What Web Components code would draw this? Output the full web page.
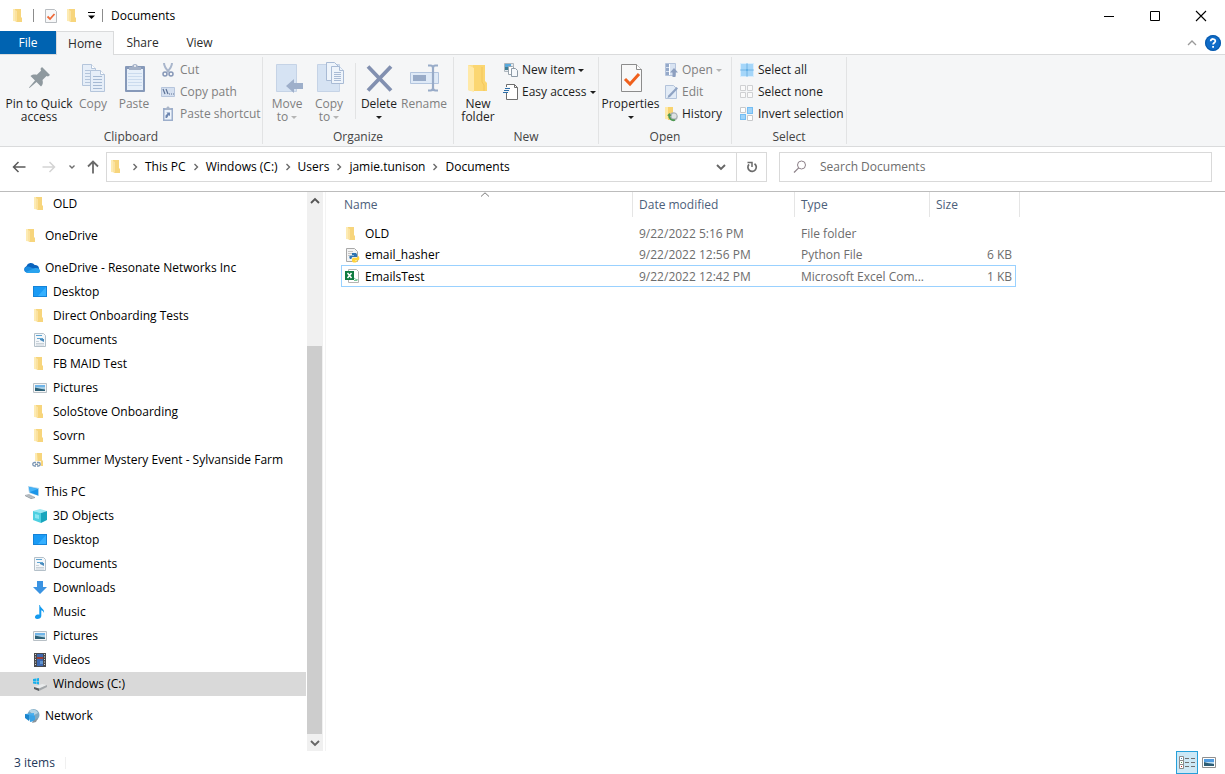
<!DOCTYPE html>
<html lang="en">
<head>
<meta charset="utf-8">
<title>Documents</title>
<style>
html, body {
  height: 100%;
}
body {
  margin: 0;
  background: #fff;
  color: #000;
  font: 12px/16px "Open Sans", "Noto Sans", sans-serif;
}
</style>
</head>
<body>
<explorer-window>
  <title-bar slot="title">Documents</title-bar>
  <ribbon-tabs slot="tabs"></ribbon-tabs>

  <ribbon-bar slot="ribbon">
    <ribbon-group label="Clipboard" style="width: 263px">
      <ribbon-button large icon="pin" style="width: 72px">Pin to Quick access</ribbon-button>
      <ribbon-button large disabled icon="copy" style="width: 36px">Copy</ribbon-button>
      <ribbon-button large disabled icon="paste" style="width: 46px">Paste</ribbon-button>
      <ribbon-stack>
        <ribbon-button disabled icon="cut">Cut</ribbon-button>
        <ribbon-button disabled icon="copy-path">Copy path</ribbon-button>
        <ribbon-button disabled icon="paste-shortcut">Paste shortcut</ribbon-button>
      </ribbon-stack>
    </ribbon-group>
    <ribbon-group label="Organize" style="width: 191px">
      <ribbon-button large disabled menu icon="move-to" style="width: 42px">Move to</ribbon-button>
      <ribbon-button large disabled menu icon="copy-to" style="width: 42px">Copy to</ribbon-button>
      <ribbon-separator></ribbon-separator>
      <ribbon-button large menu icon="delete" style="width: 42px">Delete</ribbon-button>
      <ribbon-button large disabled icon="rename" style="width: 48px">Rename</ribbon-button>
    </ribbon-group>
    <ribbon-group label="New" style="width: 145px">
      <ribbon-button large icon="new-folder" style="width: 42px">New folder</ribbon-button>
      <ribbon-stack>
        <ribbon-button menu icon="new-item">New item</ribbon-button>
        <ribbon-button menu icon="easy-access">Easy access</ribbon-button>
      </ribbon-stack>
    </ribbon-group>
    <ribbon-group label="Open" style="width: 133px">
      <ribbon-button large menu icon="properties" style="width: 57px">Properties</ribbon-button>
      <ribbon-stack>
        <ribbon-button disabled menu icon="open">Open</ribbon-button>
        <ribbon-button disabled icon="edit">Edit</ribbon-button>
        <ribbon-button icon="history">History</ribbon-button>
      </ribbon-stack>
    </ribbon-group>
    <ribbon-group label="Select" style="width: 115px">
      <ribbon-stack>
        <ribbon-button icon="select-all">Select all</ribbon-button>
        <ribbon-button icon="select-none">Select none</ribbon-button>
        <ribbon-button icon="invert">Invert selection</ribbon-button>
      </ribbon-stack>
    </ribbon-group>
  </ribbon-bar>

  <nav-bar slot="nav" path="This PC/Windows (C:)/Users/jamie.tunison/Documents"></nav-bar>

  <tree-pane slot="tree">
    <tree-item icon="folder" level="2">OLD</tree-item>
    <tree-item icon="folder" root>OneDrive</tree-item>
    <tree-item icon="onedrive" root>OneDrive - Resonate Networks Inc</tree-item>
    <tree-item icon="desktop" level="2">Desktop</tree-item>
    <tree-item icon="folder" level="2">Direct Onboarding Tests</tree-item>
    <tree-item icon="documents" level="2">Documents</tree-item>
    <tree-item icon="folder" level="2">FB MAID Test</tree-item>
    <tree-item icon="pictures" level="2">Pictures</tree-item>
    <tree-item icon="folder" level="2">SoloStove Onboarding</tree-item>
    <tree-item icon="folder" level="2">Sovrn</tree-item>
    <tree-item icon="folder-link" level="2">Summer Mystery Event - Sylvanside Farm</tree-item>
    <tree-item icon="pc" root>This PC</tree-item>
    <tree-item icon="objects" level="2">3D Objects</tree-item>
    <tree-item icon="desktop" level="2">Desktop</tree-item>
    <tree-item icon="documents" level="2">Documents</tree-item>
    <tree-item icon="downloads" level="2">Downloads</tree-item>
    <tree-item icon="music" level="2">Music</tree-item>
    <tree-item icon="pictures" level="2">Pictures</tree-item>
    <tree-item icon="videos" level="2">Videos</tree-item>
    <tree-item icon="drive" level="2" selected>Windows (C:)</tree-item>
    <tree-item icon="network" root>Network</tree-item>
  </tree-pane>

  <file-list slot="files"></file-list>
  <status-bar slot="status">3 items</status-bar>
</explorer-window>

<script>
// name: [width, height, markup]
const ICONS = {
  "folder": [16, 16, `<path d="M2 1h7v13l-7-1z" fill="#fdebb3"/><path d="M4 1h6v8l1 1v4H5z" fill="#f7d57c"/><path d="M4 2l2 1v11l-2-1z" fill="#fbe2a0"/>`],
  "folder-link": [16, 16, `<path d="M3 1h7v13H3z" fill="#fdebb3"/><path d="M5 1h5v7l1 1v5H6z" fill="#f7d57c"/><path d="M0 9h9v6H0z" fill="#fff" opacity=".8"/><g fill="none" stroke="#7d98b5" stroke-width="1.3"><path d="M4 10.500H2.500a1.700 1.700 0 0 0 0 3.500H4M5 10.500h1.500a1.700 1.700 0 0 1 0 3.500H5M3 12.300h3"/></g>`],
  "properties-small": [16, 16, `<path d="M2.500 1.500h9l2 2v11h-11z" fill="#f7f8f9" stroke="#b9bdc1"/><path d="M4.500 8.500l2.500 2.500 4.500-5" fill="none" stroke="#ee6a3a" stroke-width="1.800"/>`],
  "qat-menu": [9, 9, `<path d="M1 1.500h7" stroke="#000"/><path d="M1 4.500h7L4.500 8z"/>`],
  "minimize": [12, 12, `<path d="M1 6.500h10" stroke="#000"/>`],
  "maximize": [12, 12, `<path d="M1.500 1.500h9v9h-9z" fill="none" stroke="#000"/>`],
  "close": [12, 12, `<path d="M1 1l10 10M11 1L1 11" stroke="#000" stroke-width="1.100"/>`],
  "collapse": [10, 6, `<path d="M1 5l4-4 4 4" fill="none" stroke="#9a9a9a" stroke-width="1.300"/>`],
  "help": [16, 16, `<circle cx="8" cy="8" r="8" fill="#0f6cc9"/><circle cx="8" cy="8" r="7.300" fill="none" stroke="#0a57a5"/><path d="M5.700 6.200c0-3 4.800-2.800 4.600 0-.1 1.500-2.200 1.700-2.200 3.400" fill="none" stroke="#fff" stroke-width="1.800"/><path d="M7.200 10.900H9v1.800H7.200z" fill="#fff"/>`],

  "pin": [32, 32, `<path d="M19 5l8 8-2 1.500-1.500-.5-4 4c.8 3 .3 5-1.500 6.500l-4.500-4.500L6.500 26 6 25.500 12 18.500l-4.500-4.500c2-1.500 4-1.800 6.300-1.200l4.200-4-.5-2z" fill="#8f999f"/>`],
  "copy": [32, 32, `<g stroke="#b4c5db" fill="#e6eef8"><path d="M5.500 2.500h9l4 4v17h-13z"/><path d="M14.500 2.500v4h4" fill="#fff"/><path d="M8 8.500h8M8 11.500h8M8 14.500h8M8 17.500h8M8 20.500h8"/><path d="M13.500 8.500h10l4 4v17h-14z"/><path d="M23.500 8.500v4h4" fill="#fff"/><path d="M16 14.500h9M16 17.500h9M16 20.500h9M16 23.500h9M16 26.500h9" stroke="#a5b9d3"/></g>`],
  "paste": [32, 32, `<rect x="7" y="4" width="20" height="26" rx="1" fill="#8699b9"/><path d="M9 7h16v21H9z" fill="#e7f0fa"/><path d="M10 11.500h14M10 14.500h14M10 17.500h14M10 20.500h14M10 23.500h14" stroke="#cbdbee"/><path d="M11 8V5h3c0-4 6-4 6 0h3v3z" fill="#a3b0c6"/><circle cx="17" cy="4" r="1" fill="#f5f6f7"/>`],
  "move-to": [34, 32, `<path d="M6.500 2.500h20v27h-20z" fill="#d6e3f3" stroke="#c5d3e6"/><path d="M16 24l8-7v4h9v6h-9v4z" fill="#9eafca"/>`],
  "copy-to": [34, 32, `<path d="M5.500 2.500h22v27h-22z" fill="#d6e3f3" stroke="#c5d3e6"/><g fill="#eef4fb" stroke="#a9bbd5"><path d="M14.500.5h8l4 4v14h-12z"/><path d="M19.500 4.500h8l4 4v13h-12z"/><path d="M27.500 4.500v4h4M22 10.500h7M22 12.500h7M22 14.500h7M22 16.500h7M22 18.500h7"/></g>`],
  "delete": [32, 32, `<path d="M5 4.500l23 24M28 4.500l-23 24" stroke="#8290b0" stroke-width="3.800" fill="none"/>`],
  "rename": [32, 32, `<path d="M2.500 10.500h28v11h-28z" fill="#dfeaf7" stroke="#b3c5de"/><path d="M5 13h13v6H5z" fill="#98abc8"/><path d="M20 3.500h2.500c2 0 2.500 1 2.500 2.500v20c0 1.500-.5 2.500-2.500 2.500H20M30 3.500h-2.500c-2 0-2.500 1-2.500 2.500M30 28.500h-2.500c-2 0-2.500-1-2.500-2.500" fill="none" stroke="#98abc8" stroke-width="2.200"/>`],
  "new-folder": [32, 32, `<path d="M6 3h17v26H9l-3-1z" fill="#fbdf8c"/><path d="M11 3h12v16l2 2v8H11z" fill="#fbd671"/><path d="M6 3l6 3v24l-6-2z" fill="#ffe9a8"/><path d="M20 5v15l2 3v6" fill="none" stroke="#f3c65c"/>`],
  "properties": [32, 32, `<path d="M6.500 2.500h15l5 5v22h-20z" fill="#f8f8f8" stroke="#8c8c8c"/><path d="M21.500 2.500v5h5" fill="#fff" stroke="#8c8c8c"/><path d="M10 17l5 5 9-10" fill="none" stroke="#f0601c" stroke-width="3"/>`],

  "cut": [16, 16, `<path d="M4 1c0 3 2 6 5 9M12 1c0 3-2 6-5 9" fill="none" stroke="#a9b6cc" stroke-width="2"/><g fill="none" stroke="#8798b7" stroke-width="1.500"><circle cx="5" cy="12" r="2"/><circle cx="11" cy="12" r="2"/></g>`],
  "copy-path": [16, 16, `<path d="M1.500 3.500h13v9h-13z" fill="#d5e0f0" stroke="#b6c5dc"/><path d="M3 5l2 5M6 5l2 5M9 10h1M11 10h1M13 10h1" stroke="#5c7194" stroke-width="1.200"/>`],
  "paste-shortcut": [16, 16, `<path d="M3 2h10v13H3z" fill="#9caecb"/><path d="M4.500 4h7v9.500h-7z" fill="#eef4fb"/><path d="M5 4V2h1.500c0-2 3-2 3 0H11v2z" fill="#a9b5c9"/><path d="M5.500 12V9.500l2-2L6.300 6.500H10v3.800L8.800 9 7 12z" fill="#6d86b0"/>`],
  "new-item": [16, 16, `<path d="M2.500 1.500h9v8h-9z" fill="#e4e9ee" stroke="#aeb6bd"/><path d="M3 2h6v3H3z" fill="#58a9dc"/><path d="M3 5h3v3H3z" fill="#3d7e95"/><path d="M6.500 4.500h4l2 2v6h-6z" fill="#fff" stroke="#9aa5ae"/><path d="M9.500 6.500h4l2 2v6h-6z" fill="#f5f8fb" stroke="#8d9aa6"/>`],
  "easy-access": [16, 16, `<path d="M4.500.5h8l3 3v12h-11z" fill="#fff" stroke="#6e6e6e"/><path d="M12.500.5v3h3" fill="none" stroke="#6e6e6e"/><path d="M3 3h5v6H1z" fill="#f5f6f7"/><path d="M3 4.500h5M2 6.500h5M1 8.500h5" stroke="#2a6da8" stroke-width="1.100"/>`],
  "open": [16, 16, `<path d="M3.500 1.500h10v12h-10z" fill="#d8e3f2" stroke="#b5c4dc"/><path d="M4 2h3v3H4zM4 6h3v3H4zM4 10h3v3H4z" fill="#95a9c9"/><path d="M7.500 2v11" stroke="#fff"/><path d="M12 6l4 4.500h-2.500V15h-3v-4.500H8z" fill="#8d9fbf"/>`],
  "edit": [16, 16, `<path d="M3.500 1.500h8l3 3v10h-11z" fill="#e2ebf6" stroke="#b3c3da"/><path d="M14.500 3L16 4.500 8 13l-2.500 1 .8-2.600z" fill="#8fa3c3"/>`],
  "history": [16, 16, `<path d="M3 1h8v13l-8-1z" fill="#ffe9a6"/><path d="M6 1h5v6l1 1v6H6z" fill="#f8d36f"/><circle cx="11.500" cy="10.500" r="4.300" fill="#a9b0b3"/><circle cx="12" cy="10" r="2.500" fill="#dfe3e4"/><path d="M7 9c0 4 3 6 6 5" fill="none" stroke="#4f9a53" stroke-width="1.800"/><path d="M5 9.500L7.500 7l2 3z" fill="#4f9a53"/>`],
  "select-all": [16, 16, `<rect x="2" y="1" width="14" height="14" fill="#d9edfc"/><path d="M3 2h5v5H3zM10 2h5v5h-5zM3 9h5v5H3zM10 9h5v5h-5z" fill="#a5d6f9"/><path d="M9 1.500v13M2.500 8h13" stroke="#3d9ce0"/>`],
  "select-none": [16, 16, `<path d="M2.500 1.500h5v5h-5zM9.500 1.500h5v5h-5zM2.500 8.500h5v5h-5zM9.500 8.500h5v5h-5z" fill="#fafafa" stroke="#cfd0d2"/>`],
  "invert": [16, 16, `<path d="M2.500 1.500h5v5h-5zM9.500 9.500h5v5h-5z" fill="#fff" stroke="#c7c9cb"/><path d="M9 1h6v7H9zM2 8h6v6H2z" fill="#74bdf3"/><path d="M10 2h4v5h-4zM3 9h4v4H3z" fill="#9ed3f9"/>`],

  "back": [16, 16, `<path d="M14.500 8H2.500M7.500 3L2.500 8l5 5" fill="none" stroke="#5a5a5a" stroke-width="1.500"/>`],
  "forward": [16, 16, `<path d="M1.500 8h12M8.500 3l5 5-5 5" fill="none" stroke="#d4d4d4" stroke-width="1.500"/>`],
  "up": [16, 16, `<path d="M8 14.500v-12M3 7.500l5-5 5 5" fill="none" stroke="#6a6a6a" stroke-width="1.800"/>`],
  "recent": [8, 6, `<path d="M1.500 1.500L4 4l2.500-2.500" fill="none" stroke="#6e6e6e" stroke-width="1.400"/>`],
  "chevron-down": [10, 8, `<path d="M1 2l4 4 4-4" fill="none" stroke="#666" stroke-width="1.900"/>`],
  "chevron-up": [10, 8, `<path d="M1 6l4-4 4 4" fill="none" stroke="#555" stroke-width="1.900"/>`],
  "chevron-right": [6, 8, `<path d="M1.500 1L4.500 4l-3 3" fill="none" stroke="#6a6a6a" stroke-width="1.400"/>`],
  "refresh": [12, 12, `<path d="M8.500 2.700A4.200 4.200 0 1 1 3 3.300" fill="none" stroke="#6b6b6b" stroke-width="1.700"/><path d="M1.500 1.500H6V6" fill="none" stroke="#6b6b6b" stroke-width="1.500"/>`],
  "search": [14, 14, `<circle cx="8.500" cy="5" r="4" fill="none" stroke="#8c8088"/><path d="M5.700 7.800L1 12.500" stroke="#8c8088" stroke-width="1.200"/>`],
  "sort": [10, 5, `<path d="M1 4.500L5 .8l4 3.700" fill="none" stroke="#7a7a7a"/>`],

  "onedrive": [16, 16, `<path d="M3 12.500a3.300 3.300 0 0 1-.6-6.300 4.700 4.700 0 0 1 8.300-1.200 4 4 0 0 1 2.300 7.500z" fill="#0a63bd"/><path d="M5.500 13c-3 0-6-1-5.200-4.200C1 6.500 4.500 5.500 7 7.500l8.500 2.800c.8 1.400-.2 2.700-2.500 2.700z" fill="#1b8be0"/><path d="M2 12l9-4c3-.5 5 1 5 2.800 0 1.500-1.200 2.200-2.500 2.200h-10z" fill="#2aa3ee"/>`],
  "desktop": [16, 16, `<path d="M1 2h14v11H1z" fill="#1583d8"/><path d="M2 3h12v9H2z" fill="#1a9bf5"/><path d="M14 3v9H6z" fill="#35b0ff"/>`],
  "documents": [16, 16, `<path d="M2.500 1.500h9l2 2v11h-11z" fill="#f4f7fa" stroke="#b4c0c9"/><path d="M4 3.500h6M5 6.500h6" stroke="#5fa5d2"/><path d="M4 9.500h3M4 11.500h8M4 13h8" stroke="#c8d1d8"/><path d="M8 7h4v3l-2-1-2-1z" fill="#4a8bbd"/>`],
  "pictures": [16, 16, `<path d="M1.500 3.500h13v9h-13z" fill="#f5f5f5" stroke="#b8c0c6"/><path d="M3 5h10v3H3z" fill="#6fb4e8"/><path d="M3 7h10v4H3z" fill="#a8cfe5"/><path d="M3 7.500c3 .5 5 1.500 10 2V11H3z" fill="#2d6177"/>`],
  "pc": [16, 16, `<path d="M1 11l6 3 4-1-6-3z" fill="#b3b9be"/><path d="M1 11v1l6 3 4-1v-1l-4 1z" fill="#8f979d"/><path d="M4 2l11 2v8L5 9z" fill="#a9d3ee"/><path d="M5 3l9 2v6.500L6 8.500z" fill="#1b95e8"/><path d="M5 3l9 2-8 3z" fill="#45b3f7"/>`],
  "objects": [16, 16, `<path d="M1 3l7-2 7 2-6 2z" fill="#9be9f4"/><path d="M1 3l8 2v10l-8-3z" fill="#4dd0e1"/><path d="M9 5l6-2v9l-6 3z" fill="#18a5bd"/><path d="M3 6l4 1v4l-4-1z" fill="#8be6f2"/>`],
  "downloads": [16, 16, `<path d="M5 1h6v6h4l-7 7-7-7h4z" fill="#3a93e2"/>`],
  "music": [16, 16, `<path d="M8 1c0 3 5 4 4 8-.5-2-2-2.500-2.700-2.700V12c0 2-2 3-4 3s-3-1.500-2-3 3-1.800 4-1.200V1z" fill="#159bef"/>`],
  "videos": [16, 16, `<path d="M2 1h12v14H2z" fill="#48494d"/><path d="M5 2h6v12H5z" fill="#3c68b1"/><path d="M5 5h6v2H5z" fill="#9c3f35"/><path d="M8 9h3v3H8z" fill="#5f94cf"/><path d="M3.500 2v12M12.500 2v12" stroke="#d4d6d8" stroke-dasharray="1 1.500"/>`],
  "drive": [16, 16, `<path d="M1 3l3-.5V5H1zM4.500 2.500L7 2v3H4.500zM1 5.500h3V8L1 7.500zM4.500 5.500H7v3L4.500 8z" fill="#17b0ec"/><path d="M2 11l8-3 5 1-8 3.500z" fill="#e9ebec"/><path d="M2 11l5 1.500V15l-5-2z" fill="#565b5f"/><path d="M7 12.500L15 9v2l-8 4z" fill="#a3a7aa"/>`],
  "network": [16, 16, `<circle cx="9.500" cy="7" r="6" fill="#7fa9c2"/><path d="M5 3c3-3 8-1 9 2l-4 2z" fill="#b5d4e5"/><path d="M1 6l9-1v7L5 11z" fill="#45aef0"/><path d="M1 6l4 1v6l-4-3z" fill="#1b84cc"/><path d="M5 7l6 1v5l-5 1z" fill="#3ba3e6"/><path d="M9 13l5-3-2 4-4 1z" fill="#8a949b"/>`],

  "python": [16, 16, `<path d="M2.500 1.500h8l3 3v10h-11z" fill="#f4f4f4" stroke="#a8a8a8"/><path d="M4 4.500h5M4 6.500h4M4 8.500h2" stroke="#c4c4c4"/><path d="M8 6h3c1.200 0 2 .6 2 1.800V10H9.500c-1.500 0-2 .6-2 2H6.500C5 12 5 8.500 6.500 8.500H10V8H8z" fill="#2e74b0"/><path d="M14 9c1.800.2 1.800 4.500 0 4.500h-3v.5h2c0 2-5 2-5 0v-1.500c0-1.200.8-1.800 2-1.800h2.500c1 0 1.500-.7 1.500-1.700z" fill="#ffd43b"/>`],
  "excel": [16, 16, `<path d="M4.500 1.500h8l2 2v11h-10z" fill="#fff" stroke="#b4b4b4"/><path d="M10 10l2 1.500 2 .5M10 12.500h3" stroke="#7bc79b" fill="none"/><rect x="1" y="3" width="9" height="9" fill="#107c41"/><path d="M3.500 5l4 5M7.500 5l-4 5" stroke="#fff" stroke-width="1.500"/>`],

  "details": [16, 14, `<g fill="#fff" stroke="#8b8b8b"><path d="M.5.5h4v4h-4zM.5 4.500h4v4h-4zM.5 8.500h4v4h-4z"/></g><path d="M2 2h1v1H2z" fill="#4a90c0"/><path d="M2 6h1v1H2z" fill="#4a9050"/><path d="M2 10h1v1H2z" fill="#c03030"/><path d="M6 2.500h4M12 2.500h4M6 6.500h4M12 6.500h4M6 10.500h4M12 10.500h4" stroke="#707070"/>`],
  "thumbs": [14, 11, `<path d="M.5.5h13v10H.5z" fill="#fff" stroke="#8f8f8f"/><path d="M2 2h10v4H2z" fill="#4f9be0"/><path d="M2 5h10v2H2z" fill="#bfe0f5"/><path d="M2 5c4 1 6 1.500 10 2v2H2z" fill="#2e5d74"/>`],
};

function icon(name) {
  const [w, h, body] = ICONS[name];
  return `<svg width="${w}" height="${h}" viewBox="0 0 ${w} ${h}" aria-hidden="true">${body}</svg>`;
}

const RESET = `
  :host, * { box-sizing: border-box; }
  svg { display: block; flex: none; }
  button {
    appearance: none; background: none; border: 0; margin: 0; padding: 0;
    color: inherit; font: inherit;
  }
`;

class BaseElement extends HTMLElement {
  constructor() {
    super();
    this.attachShadow({mode: "open"});
  }
  connectedCallback() {
    this.shadowRoot.innerHTML = `<style>${RESET}</style>` + this.render();
  }
}

customElements.define("explorer-window", class extends BaseElement {
  render() {
    return `
<style>
:host { display: flex; flex-direction: column; height: 100vh; overflow: hidden; }
main { flex: 1; min-height: 0; display: flex; border-top: 1px solid #bcbcbc; }
slot[name="files"]::slotted(*) { flex: 1; min-width: 0; }
</style>
<slot name="title"></slot>
<slot name="tabs"></slot>
<slot name="ribbon"></slot>
<slot name="nav"></slot>
<main><slot name="tree"></slot><slot name="files"></slot></main>
<slot name="status"></slot>`;
  }
});

customElements.define("title-bar", class extends BaseElement {
  render() {
    return `
<style>
:host { display: flex; align-items: center; height: 31px; flex: none; }
.quick { display: flex; align-items: center; padding-left: 11px; }
.quick button { margin-right: 6px; }
.bar { width: 1px; height: 13px; background: #8c8c8c; }
.bar:first-of-type { margin-right: 9px; }
h1 { flex: 1; font: inherit; margin: 0 0 0 8px; }
.controls { display: flex; padding-right: 1px; }
.controls button { width: 46px; height: 30px; display: grid; place-items: center; }
</style>
<div class="quick">
  <button aria-label="Window menu">${icon("folder")}</button>
  <span class="bar"></span>
  <button aria-label="Properties">${icon("properties-small")}</button>
  <button aria-label="New folder">${icon("folder")}</button>
  <button aria-label="Customize toolbar">${icon("qat-menu")}</button>
  <span class="bar"></span>
</div>
<h1><slot></slot></h1>
<div class="controls">
  <button aria-label="Minimize">${icon("minimize")}</button>
  <button aria-label="Maximize">${icon("maximize")}</button>
  <button aria-label="Close">${icon("close")}</button>
</div>`;
  }
});

customElements.define("ribbon-tabs", class extends BaseElement {
  render() {
    return `
<style>
:host { display: flex; height: 24px; flex: none; border-bottom: 1px solid #dadbdc; color: #2b2b2b; }
button { min-width: 56px; height: 23px; }
.file { background: #0063b1; color: #fff; }
.active {
  min-width: 58px; height: 24px; background: #f5f6f7;
  border: 1px solid #dadbdc; border-bottom: 0;
}
.tab { min-width: 57px; }
.tools { display: flex; align-items: center; gap: 8px; margin-left: auto; padding-right: 4px; }
.tools button { min-width: 0; display: grid; place-items: center; }
</style>
<button class="file">File</button>
<button class="active">Home</button>
<button class="tab">Share</button>
<button class="tab">View</button>
<div class="tools">
  <button aria-label="Minimize the ribbon">${icon("collapse")}</button>
  <button aria-label="Help">${icon("help")}</button>
</div>`;
  }
});

customElements.define("ribbon-bar", class extends BaseElement {
  render() {
    return `
<style>
:host { display: flex; height: 92px; flex: none; padding: 2px 0; background: #f5f6f7; border-bottom: 1px solid #dadbdc; }
</style>
<slot></slot>`;
  }
});

customElements.define("ribbon-group", class extends BaseElement {
  render() {
    return `
<style>
:host { display: flex; flex-direction: column; flex: none; padding: 2px 0 0 3px; border-right: 1px solid #e2e3e4; }
.items { display: flex; flex: 1; }
.label { text-align: center; line-height: 14px; color: #444; margin-left: -3px; }
</style>
<div class="items"><slot></slot></div>
<div class="label">${this.getAttribute("label")}</div>`;
  }
});

customElements.define("ribbon-stack", class extends BaseElement {
  render() {
    return `<style>:host { display: flex; flex-direction: column; padding-left: 3px; }</style><slot></slot>`;
  }
});

customElements.define("ribbon-separator", class extends BaseElement {
  render() {
    return `<style>:host { width: 1px; height: 56px; margin: 4px 2px 0 5px; background: #e2e3e4; }</style>`;
  }
});

customElements.define("ribbon-button", class extends BaseElement {
  render() {
    const large = this.hasAttribute("large");
    const disabled = this.hasAttribute("disabled") ? "disabled" : "";
    const arrow = this.hasAttribute("menu") ? `<i class="arrow"></i>` : "";
    return `
<style>
:host { display: block; flex: none; color: #1e1e1e; }
:host([disabled]) { color: #7f7f7f; }
button { display: flex; align-items: center; gap: 4px; height: 22px; white-space: nowrap; }
.arrow {
  display: inline-block; vertical-align: middle;
  border: 3px solid transparent; border-top-color: currentColor; border-bottom: 0;
}
:host([disabled]) .arrow { border-top-color: #b5b5b5; }
button.large {
  flex-direction: column; width: 100%; height: auto; padding-top: 3px; gap: 3px;
  line-height: 13px; white-space: normal; text-align: center;
}
</style>
<button class="${large ? "large" : ""}" ${disabled}>
  ${icon(this.getAttribute("icon"))}
  <span><slot></slot> ${arrow}</span>
</button>`;
  }
});

customElements.define("nav-bar", class extends BaseElement {
  render() {
    const crumbs = this.getAttribute("path").split("/")
      .map(name => `<li>${icon("chevron-right")}<button>${name}</button></li>`).join("");
    return `
<style>
:host { display: flex; flex: none; height: 44px; padding: 5px 13px 9px 11px; }
.history { display: flex; align-items: center; }
.history button { margin-right: 14px; }
.history button:nth-child(2) { margin-right: 11px; }
.history button:nth-child(3) { margin-right: 9px; }
.history button:nth-child(4) { margin-right: 5px; }
.address { flex: 657 1 0; min-width: 0; display: flex; align-items: center; border: 1px solid #d9d9d9; padding-left: 2px; }
ol { display: flex; flex: 1; list-style: none; margin: 0 0 0 7px; padding: 0; }
li { display: flex; align-items: center; }
li button { margin: 0 7px; white-space: nowrap; }
.drop, .refresh { width: 30px; height: 28px; display: grid; place-items: center; }
.refresh { border-left: 1px solid #d9d9d9; }
.search { flex: 405 1 0; min-width: 0; display: flex; align-items: center; gap: 13px; margin-left: 12px; padding: 0 13px; border: 1px solid #d9d9d9; }
input { flex: 1; min-width: 0; border: 0; outline: 0; padding: 0; font: inherit; background: none; }
input::placeholder { color: #6d6d6d; opacity: 1; }
</style>
<div class="history">
  <button aria-label="Back">${icon("back")}</button>
  <button aria-label="Forward" disabled>${icon("forward")}</button>
  <button aria-label="Recent locations">${icon("recent")}</button>
  <button aria-label="Up">${icon("up")}</button>
</div>
<div class="address">
  ${icon("folder")}
  <ol>${crumbs}</ol>
  <button class="drop" aria-label="Previous locations">${icon("chevron-down")}</button>
  <button class="refresh" aria-label="Refresh">${icon("refresh")}</button>
</div>
<label class="search">
  ${icon("search")}
  <input type="text" placeholder="Search Documents" aria-label="Search Documents">
</label>`;
  }
});

customElements.define("tree-pane", class extends BaseElement {
  render() {
    return `
<style>
:host { display: flex; width: 326px; flex: none; border-right: 1px solid #f3f3f3; }
nav { flex: 1; min-width: 0; overflow: hidden; }
.scroll { display: flex; flex-direction: column; width: 16px; margin: 0 2px 0 1px; background: #f0f0f0; }
.scroll button { height: 17px; flex: none; display: grid; place-items: center; }
.before { flex: 137; }
.thumb { flex: 387; margin-right: 1px; background: #cdcdcd; }
</style>
<nav><slot></slot></nav>
<div class="scroll">
  <button aria-label="Scroll up">${icon("chevron-up")}</button>
  <div class="before"></div>
  <div class="thumb"></div>
  <button aria-label="Scroll down">${icon("chevron-down")}</button>
</div>`;
  }
});

customElements.define("tree-item", class extends BaseElement {
  render() {
    return `
<style>
:host { display: block; }
:host([root]) { margin-top: 8px; }
a {
  display: flex; align-items: center; gap: 5px; height: 24px; padding-left: 24px;
  color: inherit; text-decoration: none; white-space: nowrap;
}
:host([level="2"]) a { padding-left: 32px; }
:host([selected]) a { background: #d9d9d9; }
</style>
<a href="#">${icon(this.getAttribute("icon"))}<span><slot></slot></span></a>`;
  }
});

const FILES = [
  {icon: "folder", name: "OLD", date: "9/22/2022 5:16 PM", type: "File folder", size: ""},
  {icon: "python", name: "email_hasher", date: "9/22/2022 12:56 PM", type: "Python File", size: "6 KB"},
  {icon: "excel", name: "EmailsTest", date: "9/22/2022 12:42 PM", type: "Microsoft Excel Com...", size: "1 KB", focused: true},
];

customElements.define("file-list", class extends BaseElement {
  render() {
    const rows = FILES.map(f => `
<tr class="${f.focused ? "focused" : ""}">
  <td><span class="name">${icon(f.icon)}${f.name}</span></td>
  <td>${f.date}</td>
  <td>${f.type}</td>
  <td>${f.size}</td>
  <td></td>
</tr>`).join("");
    return `
<style>
:host { display: block; padding-left: 15px; }
table { border-spacing: 0; table-layout: fixed; width: 679px; }
th { position: relative; padding: 0 0 6px; font-weight: normal; text-align: left; color: #4c607a; }
th button { display: block; width: 100%; height: 25px; padding-left: 6px; text-align: left; border-right: 1px solid #e5e5e5; }
th:first-child button { padding-left: 3px; }
th svg { position: absolute; top: 0; left: 50%; margin-left: -7px; }
td { height: 21px; padding: 0 0 0 6px; color: #6d6d6d; white-space: nowrap; line-height: 19px; border: solid transparent; border-width: 1px 0; }
td:first-child { padding-left: 2px; border-left-width: 1px; color: #000; }
td:nth-child(4) { padding-right: 3px; border-right-width: 1px; text-align: right; }
td:last-child { padding: 0; }
.focused td { height: 22px; }
.focused td:not(:last-child) { border-color: #99d1ff; }
.name { display: flex; align-items: center; gap: 5px; }
</style>
<table>
  <colgroup><col style="width: 292px"><col style="width: 162px"><col style="width: 135px"><col style="width: 86px"><col style="width: 4px"></colgroup>
  <thead><tr>
    <th>${icon("sort")}<button>Name</button></th>
    <th><button>Date modified</button></th>
    <th><button>Type</button></th>
    <th colspan="2"><button>Size</button></th>
  </tr></thead>
  <tbody>${rows}</tbody>
</table>`;
  }
});

customElements.define("status-bar", class extends BaseElement {
  render() {
    return `
<style>
:host { display: flex; align-items: center; height: 23px; flex: none; padding: 0 9px 0 14px; color: #1e395b; }
.count { padding-right: 10px; border-right: 1px solid #f0f0f0; line-height: 12px; }
.views { display: flex; align-items: center; gap: 4px; margin-left: auto; }
.views button { display: grid; place-items: center; height: 23px; }
.views .on { width: 22px; background: #cce8f6; border: 1px solid #26a0da; }
</style>
<span class="count"><slot></slot></span>
<div class="views">
  <button class="on" aria-label="Details">${icon("details")}</button>
  <button aria-label="Large thumbnails">${icon("thumbs")}</button>
</div>`;
  }
});
</script>
</body>
</html>
